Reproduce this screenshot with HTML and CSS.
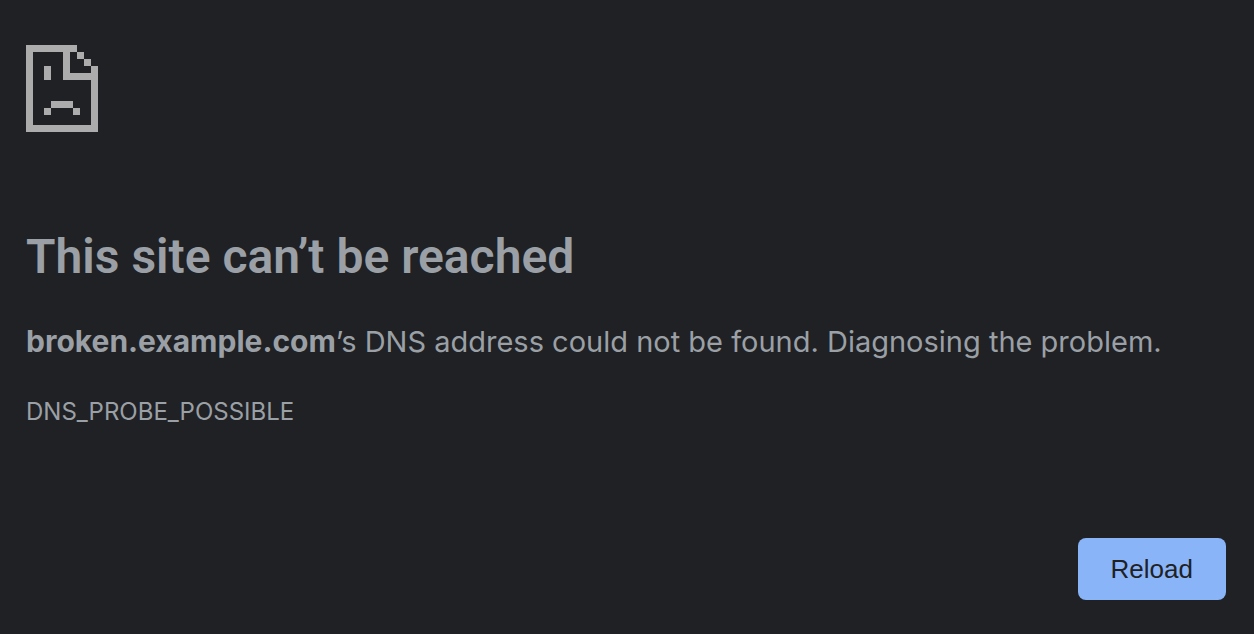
FILE: index.html
```html
<!DOCTYPE html>
<html lang="en">
<head>
<meta charset="utf-8">
<title>broken.example.com</title>
<link rel="stylesheet" href="styles.css">
</head>
<body>
<main class="page">
  <svg class="icon" viewBox="0 0 72 87" shape-rendering="crispEdges" aria-hidden="true">
    <path fill="currentColor" d="M0 0H51V7H44V28H65V21H72V87H0ZM7 7V80H65V35H37V7ZM51 7H58V14H51ZM58 14H65V21H58ZM18 21H25V35H18ZM25 56H47V63H25ZM18 63H25V70H18ZM47 63H54V70H47Z" fill-rule="evenodd"/>
  </svg>
  <h1 class="title">This site can’t be reached</h1>
  <p class="message"><strong class="host">broken.example.com</strong>’s DNS address could not be found. Diagnosing the problem.</p>
  <p class="code">DNS_PROBE_POSSIBLE</p>
  <div class="actions"><button class="reload" type="button">Reload</button></div>
</main>
</body>
</html>
```
FILE: styles.css
```css
body {
  margin: 0;
  background: #202124;
  color: #9aa0a6;
  font-family: Inter, "Liberation Sans", sans-serif;
}
.page { padding: 45px 28px 34px 26px; }
.icon { display: block; width: 72px; height: 87px; color: #acacac; }
.title { margin: 93px 0 0; font-family: Roboto, sans-serif; font-size: 48px; line-height: 64px; font-weight: 600; }
.message { margin: 30px 0 0; font-size: 29px; line-height: 44px; }
.host { font-size: 30px; font-weight: 700; }
.code { margin: 32px 0 0; font-size: 24px; line-height: 32px; }
.actions { display: flex; justify-content: flex-end; margin-top: 110px; }
.reload {
  padding: 15px 33px;
  border: 0;
  border-radius: 8px;
  background: #8ab4f8;
  color: #202124;
  font: 26px/32px "Liberation Sans", Arial, sans-serif;
}
```
